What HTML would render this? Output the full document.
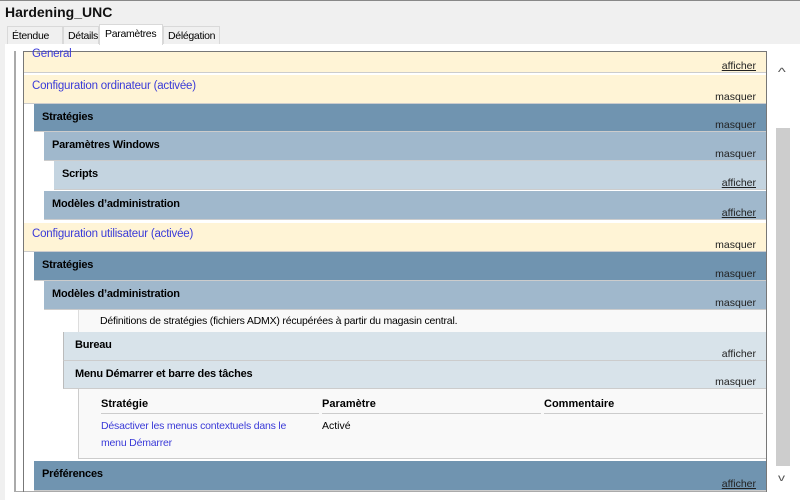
<!DOCTYPE html>
<html><head><meta charset="utf-8"><style>
*{margin:0;padding:0;box-sizing:border-box}
body{width:800px;height:499px;background:#f0f0f0;font-family:"Liberation Sans",sans-serif;font-size:11px;color:#000;position:relative;overflow:hidden;border-top:1px solid #888}
.a{position:absolute}
.title{left:5px;top:3px;font-size:14px;font-weight:bold;color:#111}
.tab{top:25px;height:18px;border:1px solid #d9d9d9;border-bottom:none;background:#f0f0f0;padding:3px 0 0 4px;font-size:10.5px;letter-spacing:-0.3px;white-space:nowrap;overflow:hidden}
.content{left:5px;top:43px;width:795px;height:456px;background:#fff}
.row{position:absolute;border-bottom:1px solid #ccc}
.row b{position:absolute;left:8px;top:7px;font-size:11px;letter-spacing:-0.2px}
.row .r{position:absolute;right:10px;bottom:0;font-size:10.5px;color:#222}
.u{text-decoration:underline}
.cream{background:#fff4d6}
.cream b{color:#3a3ad8;font-weight:normal;font-size:11.5px}
.d1{background:#7094b0}
.d2{background:#a0b8cc}
.d3{background:#c4d4e0}
.d4{background:#d8e3ea}
</style></head><body>
<div class="a title">Hardening_UNC</div>
<div class="a tab" style="left:7px;width:56px">Étendue</div>
<div class="a tab" style="left:63px;width:36px">Détails</div>
<div class="a tab" style="left:163px;width:57px">Délégation</div>
<div class="a content"></div>
<div class="a tab" style="left:99px;width:64px;top:23px;height:21px;background:#fff;padding-left:5px">Paramètres</div>
<div class="a" style="left:14px;top:50px;width:2px;height:441px;background:#aaa"></div>
<div class="a" style="left:14px;top:490px;width:753px;height:1px;background:#aaa"></div>
<div class="a" style="left:23px;top:50px;width:744px;height:441px;border-left:1px solid #777;border-top:1px solid #777;border-right:1px solid #777"></div>
<div class="a" style="left:776px;top:127px;width:14px;height:338px;background:#cdcdcd"></div>
<div class="a" style="left:779px;top:64px;font-size:12px;color:#555;transform:scaleX(1.4)">^</div>
<div class="a" style="left:779px;top:472px;font-size:10px;color:#555;transform:scaleX(1.4)">v</div>

<div class="row cream" style="left:24px;top:51px;width:742px;height:21px"><b style="top:-4px">General</b><span class="r u">afficher</span></div>
<div class="row cream" style="left:24px;top:74px;width:742px;height:29px"><b style="top:5px">Configuration ordinateur (activée)</b><span class="r">masquer</span></div>
<div class="row d1" style="left:34px;top:103px;width:732px;height:28px"><b>Stratégies</b><span class="r">masquer</span></div>
<div class="row d2" style="left:44px;top:131px;width:722px;height:29px"><b>Paramètres Windows</b><span class="r">masquer</span></div>
<div class="row d3" style="left:54px;top:160px;width:712px;height:29px"><b>Scripts</b><span class="r u">afficher</span></div>
<div class="row d2" style="left:44px;top:190px;width:722px;height:29px"><b>Modèles d’administration</b><span class="r u">afficher</span></div>
<div class="row cream" style="left:24px;top:222px;width:742px;height:29px"><b style="top:5px">Configuration utilisateur (activée)</b><span class="r">masquer</span></div>
<div class="row d1" style="left:34px;top:251px;width:732px;height:29px"><b>Stratégies</b><span class="r">masquer</span></div>
<div class="row d2" style="left:44px;top:280px;width:722px;height:29px"><b>Modèles d’administration</b><span class="r">masquer</span></div>
<div class="a" style="left:78px;top:309px;width:688px;height:22px;background:#f9f9f9;border-left:1px solid #ddd;padding:5px 0 0 21px;font-size:10.5px;letter-spacing:-0.2px">Définitions de stratégies (fichiers ADMX) récupérées à partir du magasin central.</div>
<div class="row d4" style="left:63px;top:331px;width:703px;height:29px;border-left:1px solid #bbb"><b style="left:11px">Bureau</b><span class="r">afficher</span></div>
<div class="row d4" style="left:63px;top:360px;width:703px;height:28px;border-left:1px solid #bbb"><b style="left:11px">Menu Démarrer et barre des tâches</b><span class="r">masquer</span></div>
<div class="a" style="left:78px;top:388px;width:688px;height:70px;background:#f9f9f9;border-left:1px solid #ccc;border-bottom:1px solid #ccc"></div>
<div class="a" style="left:101px;top:397px;width:218px;height:16px;border-bottom:1px solid #ccc;font-weight:bold">Stratégie</div>
<div class="a" style="left:322px;top:397px;width:219px;height:16px;border-bottom:1px solid #ccc;font-weight:bold">Paramètre</div>
<div class="a" style="left:544px;top:397px;width:219px;height:16px;border-bottom:1px solid #ccc;font-weight:bold">Commentaire</div>
<div class="a" style="left:101px;top:417px;width:200px;line-height:17px;color:#3a3ad8;font-size:10.5px;letter-spacing:-0.2px">Désactiver les menus contextuels dans le menu Démarrer</div>
<div class="a" style="left:322px;top:419px;font-size:10.5px">Activé</div>
<div class="row d1" style="left:34px;top:460px;width:732px;height:30px"><b>Préférences</b><span class="r u">afficher</span></div>
</body></html>
